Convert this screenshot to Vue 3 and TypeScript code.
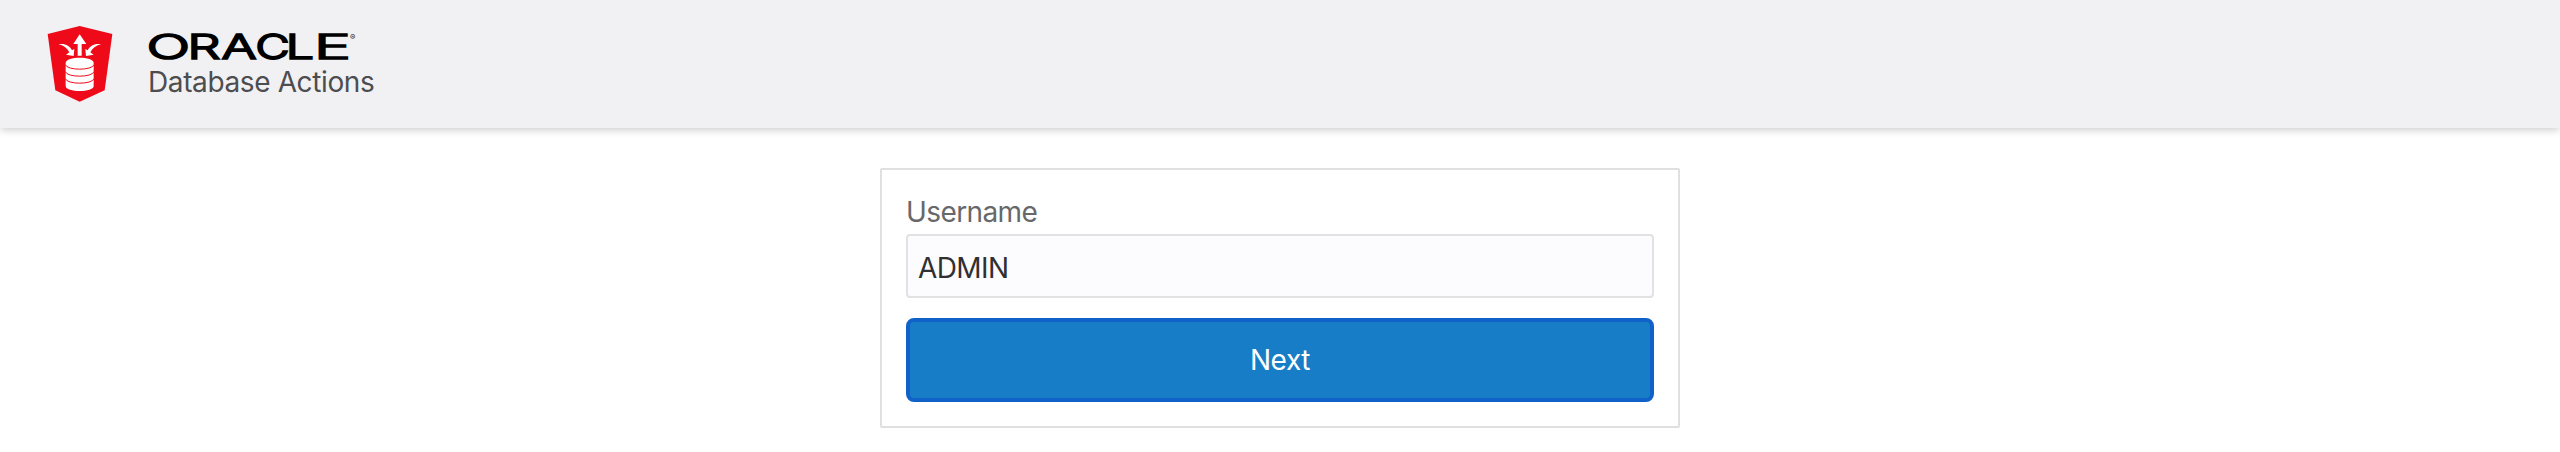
<script setup lang="ts">
import { ref } from 'vue'

interface LogoLetter {
  char: string
  x: number
  stretch: number
}

const username = ref<string>('ADMIN')

const letters: LogoLetter[] = [
  { char: 'O', x: -1.6, stretch: 1.72 },
  { char: 'R', x: 39.5, stretch: 1.56 },
  { char: 'A', x: 73.6, stretch: 1.56 },
  { char: 'C', x: 107.4, stretch: 1.4 },
  { char: 'L', x: 137.8, stretch: 1.5 },
  { char: 'E', x: 166, stretch: 1.86 },
]
</script>

<template>
  <div class="page">
    <header class="header">
      <svg class="shield" viewBox="51 45 198 234" aria-hidden="true">
        <path d="M149 48L247 72L224 241L149 275L76 241L53 72Z" fill="#ee0a18" />
        <g fill="#fff">
          <path d="M149 73L169 102H155V137H143V102H130Z" />
          <path d="M107 159C107 138 191 138 191 159V228C191 248 107 248 107 228Z" />
          <path d="M131 138L108 134L118 127C111 114 100 106 86 103C104 99 120 108 126 121L133 117Z" />
          <path d="M168 138L191 134L181 127C188 114 199 106 213 103C195 99 179 108 173 121L166 117Z" />
        </g>
        <g fill="none" stroke="#ee0a18" stroke-width="3">
          <path d="M106 164C111 182 187 182 192 164" />
          <path d="M106 185C111 203 187 203 192 185" />
          <path d="M106 206C111 224 187 224 192 206" />
        </g>
      </svg>
      <div class="brand">
        <svg class="wordmark" viewBox="0 0 212 28" role="img" aria-label="Oracle">
          <text
            v-for="letter in letters"
            :key="letter.char"
            class="logo"
            :transform="`translate(${letter.x} 26) scale(${letter.stretch} 1)`"
          >{{ letter.char }}</text>
          <text class="registered" x="202" y="7">®</text>
        </svg>
        <div class="product">Database Actions</div>
      </div>
    </header>
    <main class="main">
      <form class="card" @submit.prevent>
        <label class="label" for="username">Username</label>
        <input id="username" v-model="username" class="field" type="text" />
        <button class="next" type="submit">Next</button>
      </form>
    </main>
  </div>
</template>

<style>
body {
  background: #fff;
}
</style>

<style scoped>
.page {
  height: 452px;
  overflow: hidden;
  background: #fff;
  font-family: Inter, "Liberation Sans", sans-serif;
  font-size: 28px;
}
.header {
  display: flex;
  box-sizing: border-box;
  height: 128px;
  padding: 25px 47px 0;
  gap: 35px;
  background: #f1f1f4;
  box-shadow: 0 2px 8px rgba(0, 0, 0, 0.2);
}
.shield {
  width: 66px;
  height: 78px;
}
.brand {
  padding-top: 8px;
}
.wordmark {
  display: block;
  width: 212px;
  height: 28px;
  overflow: visible;
}
.logo {
  font-size: 33.4px;
  font-weight: 300;
  fill: #000;
  stroke: #000;
  stroke-width: 2.2px;
  vector-effect: non-scaling-stroke;
}
.registered {
  font-size: 8px;
  fill: #222;
}
.product {
  margin-top: 3px;
  line-height: 37px;
  letter-spacing: -0.38px;
  color: #4d4d50;
  white-space: nowrap;
}
.main {
  display: flex;
  justify-content: center;
  padding-top: 40px;
}
.card {
  box-sizing: border-box;
  width: 800px;
  height: 260px;
  padding: 24px;
  border: 2px solid #e0e0e0;
  border-radius: 2px;
  background: #fff;
}
.label {
  display: block;
  height: 40px;
  line-height: 37px;
  letter-spacing: -0.6px;
  color: #68686a;
}
.field {
  display: block;
  box-sizing: border-box;
  width: 100%;
  height: 64px;
  margin: 0 0 20px;
  padding: 4px 10px 0;
  border: 2px solid #e2e2e4;
  border-radius: 4px;
  outline: none;
  background: #fcfcfe;
  color: #303033;
  font: inherit;
  letter-spacing: -0.6px;
}
.next {
  display: block;
  box-sizing: border-box;
  width: 100%;
  height: 84px;
  padding: 0;
  border: 4px solid #1062c8;
  border-radius: 8px;
  background: #177dc6;
  color: #fff;
  font: inherit;
  letter-spacing: -0.4px;
}
</style>
